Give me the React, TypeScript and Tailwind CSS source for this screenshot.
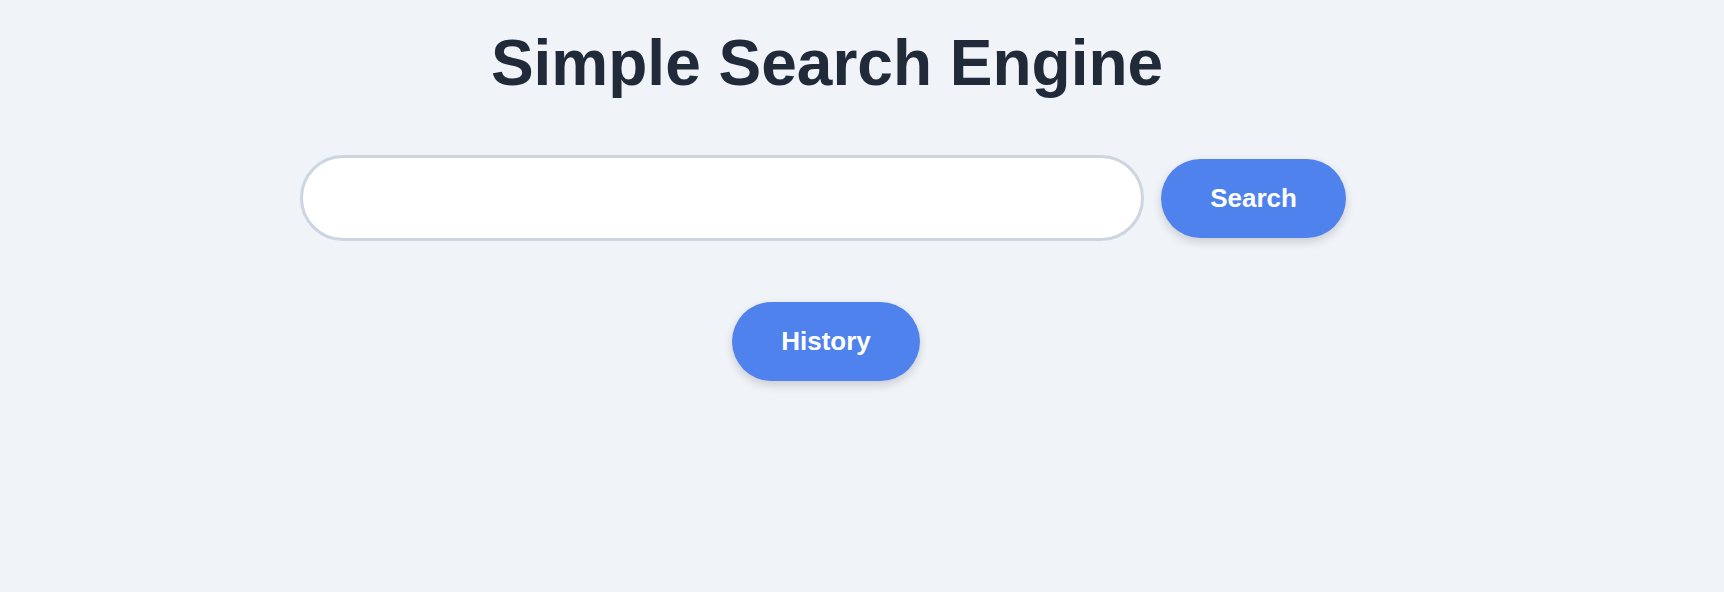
export default function App() {
    return (
        <div
            className="min-h-[592px] w-full bg-[#f0f3f8] pr-[78px]"
            style={{ fontFamily: '"Liberation Sans", Arial, sans-serif' }}
        >
            <div className="flex flex-col items-center pt-[26px]">
                {/* Title */}
                <h1 className="ml-[8px] text-[64px] font-bold leading-[74px] text-[#212a38]">Simple Search Engine</h1>

                {/* Search row */}
                <div className="mt-[55px] flex items-center gap-[17px]">
                    <input
                        type="text"
                        className="h-[86px] w-[844px] rounded-full border-[3px] border-[#cdd5e1] bg-white px-8 text-2xl outline-none"
                    />
                    <button className="h-[79px] rounded-full bg-[#4f82ec] px-[49px] text-[26px] font-bold text-white shadow-[0_4px_10px_rgba(0,0,0,0.16)]">
                        Search
                    </button>
                </div>

                {/* History */}
                <button className="ml-[6px] mt-[61px] h-[79px] rounded-full bg-[#4f82ec] px-[49px] text-[26px] font-bold text-white shadow-[0_4px_10px_rgba(0,0,0,0.16)]">
                    History
                </button>
            </div>
        </div>
    );
}
